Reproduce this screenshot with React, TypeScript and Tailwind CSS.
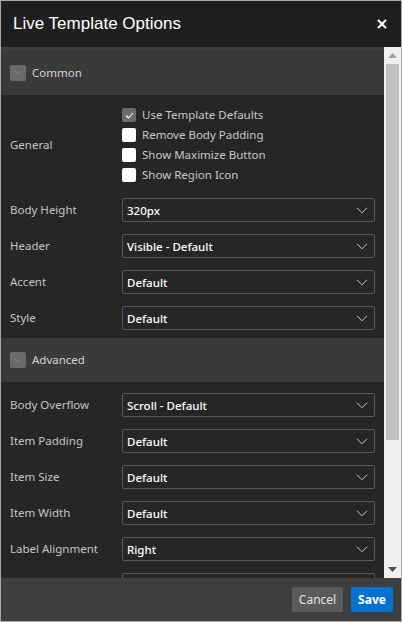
import React from "react";

const Chevron = () => (
  <svg width="12" height="7" viewBox="0 0 12 7" className="shrink-0">
    <path d="M1 0.8 L6 5.8 L11 0.8" fill="none" stroke="#c8c8c8" strokeWidth="1" />
  </svg>
);

const SectionHeader = ({ title, h, top }: { title: string; h: string; top?: boolean }) => (
  <div
    className={`flex items-center gap-[6px] pl-[9px] bg-[#3a3a3a] ${top ? "border-t-[3px] border-[#3f3f3f]" : ""} ${h}`}
  >
    <div className="w-[16px] h-[16px] rounded-[2px] bg-[#6a6a6a] flex items-center justify-center">
      <svg width="8" height="5" viewBox="0 0 8 5">
        <path d="M0.5 0.5 L4 4 L7.5 0.5" fill="none" stroke="#858585" strokeWidth="1" />
      </svg>
    </div>
    <span className="text-[11.5px] text-[#d4d4d4]">{title}</span>
  </div>
);

const SelectRow = ({ label, value }: { label: string; value: string }) => (
  <div className="flex items-center h-[36px]">
    <div className="w-[121px] pl-[9px] text-[11.5px] text-[#c4c4c4]">{label}</div>
    <div className="w-[253px] h-[24px] border border-[#585858] rounded-[2px] bg-[#262626] flex items-center justify-between pl-[4px] pr-[6px]">
      <span className="text-[11.5px] font-medium text-white pt-[1px]">{value}</span>
      <Chevron />
    </div>
  </div>
);

const Check = ({ label, checked }: { label: string; checked?: boolean }) => (
  <div className="flex items-center h-[20px] gap-[6px]">
    {checked ? (
      <div className="w-[14px] h-[14px] rounded-[2px] bg-[#6b6b6b] flex items-center justify-center">
        <svg width="9" height="7" viewBox="0 0 9 7">
          <path d="M1 3.5 L3.5 6 L8 1" fill="none" stroke="#ffffff" strokeWidth="1.1" />
        </svg>
      </div>
    ) : (
      <div className="w-[14px] h-[14px] rounded-[2px] bg-white" />
    )}
    <span className="text-[11.5px] text-[#c8c8c8]">{label}</span>
  </div>
);

export default function App() {
  return (
    <div
      className="w-[402px] h-[622px] border border-[#a8a8a8] bg-[#262626] flex flex-col overflow-hidden"
      style={{ fontFamily: '"Noto Sans", "Open Sans", sans-serif' }}
    >
      <div className="h-[46px] shrink-0 bg-[#1f1f1f] flex items-center justify-between pl-[12px] pr-[14px]">
        <span
          className="text-[17px] text-white"
          style={{ fontFamily: '"Liberation Sans", Arial, sans-serif' }}
        >
          Live Template Options
        </span>
        <svg width="10" height="10" viewBox="0 0 10 10">
          <path d="M1 1 L9 9 M9 1 L1 9" stroke="#ffffff" strokeWidth="2.2" />
        </svg>
      </div>

      <div className="flex-1 min-h-0 flex">
        <div className="flex-1 overflow-hidden">
          <SectionHeader title="Common" h="h-[48px]" top />
          <div className="flex pt-[10px] pb-[7px]">
            <div className="w-[121px] pl-[9px] flex items-center text-[11.5px] text-[#c4c4c4]">General</div>
            <div className="flex flex-col">
              <Check label="Use Template Defaults" checked />
              <Check label="Remove Body Padding" />
              <Check label="Show Maximize Button" />
              <Check label="Show Region Icon" />
            </div>
          </div>
          <SelectRow label="Body Height" value="320px" />
          <SelectRow label="Header" value="Visible - Default" />
          <SelectRow label="Accent" value="Default" />
          <SelectRow label="Style" value="Default" />
          <div className="h-[2px]" />
          <SectionHeader title="Advanced" h="h-[44px]" />
          <div className="h-[5px]" />
          <SelectRow label="Body Overflow" value="Scroll - Default" />
          <SelectRow label="Item Padding" value="Default" />
          <SelectRow label="Item Size" value="Default" />
          <SelectRow label="Item Width" value="Default" />
          <SelectRow label="Label Alignment" value="Right" />
          <SelectRow label="" value="" />
        </div>
        <div className="w-[17px] shrink-0 bg-[#f0f0f0] flex flex-col items-center">
          <div className="h-[17px] flex items-center justify-center">
            <svg width="9" height="5" viewBox="0 0 9 5">
              <path d="M0 5 L4.5 0 L9 5 Z" fill="#a3a3a3" />
            </svg>
          </div>
          <div className="w-[13px] h-[376px] bg-[#c1c1c1]" />
          <div className="flex-1" />
          <div className="h-[17px] flex items-center justify-center">
            <svg width="9" height="5" viewBox="0 0 9 5">
              <path d="M0 0 L4.5 5 L9 0 Z" fill="#505050" />
            </svg>
          </div>
        </div>
      </div>

      <div className="h-[43px] shrink-0 bg-[#3e3e3e] flex items-center justify-end gap-[8px] pr-[8px]">
        <div className="w-[51px] h-[25px] rounded-[2px] bg-[#5a5a5a] flex items-center justify-center text-[12px] text-[#e4e4e4]">
          Cancel
        </div>
        <div className="w-[42px] h-[25px] rounded-[2px] bg-[#0572ce] flex items-center justify-center text-[12px] font-bold text-white">
          Save
        </div>
      </div>
    </div>
  );
}
